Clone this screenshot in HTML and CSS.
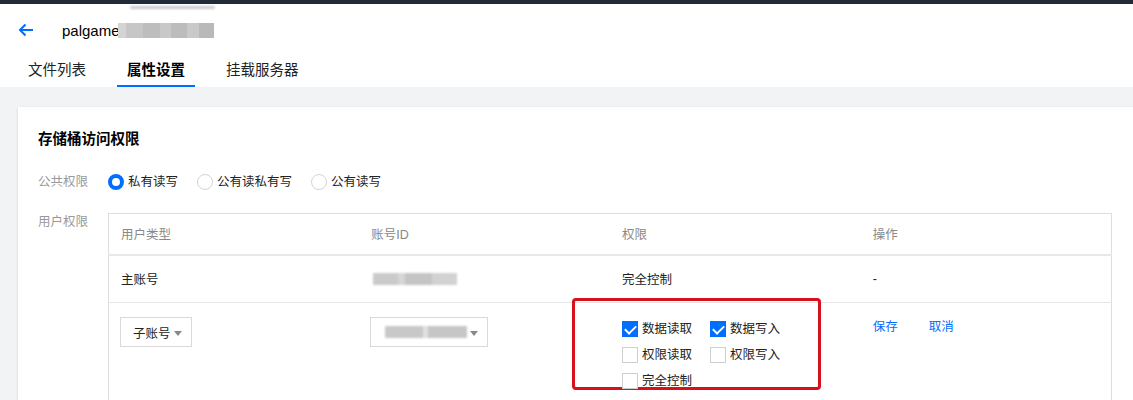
FILE: index.html
```html
<!DOCTYPE html>
<html lang="zh-CN">
<head>
<meta charset="utf-8">
<title>存储桶访问权限</title>
<link rel="stylesheet" href="styles.css">
</head>
<body>
<div class="topbar"></div>
<header class="header">
  <div class="title-row">
    <svg class="back" width="16" height="14" viewBox="0 0 16 14"><path d="M15 7H2M7.5 1.5L2 7l5.5 5.5" fill="none" stroke="#006eff" stroke-width="2"/></svg>
    <span class="bucket-name">palgame</span>
    <span class="blur-name"></span>
    <span class="blur-top"></span>
  </div>
  <nav class="tabs">
    <span class="tab">文件列表</span>
    <span class="tab active">属性设置</span>
    <span class="tab">挂载服务器</span>
  </nav>
</header>
<main class="main">
  <section class="card">
    <h2 class="card-title">存储桶访问权限</h2>
    <div class="form-row radio-row">
      <div class="label">公共权限</div>
      <div class="radios">
        <span class="radio-item"><span class="radio checked"></span>私有读写</span>
        <span class="radio-item"><span class="radio"></span>公有读私有写</span>
        <span class="radio-item"><span class="radio"></span>公有读写</span>
      </div>
    </div>
    <div class="form-row">
      <div class="label label-top">用户权限</div>
      <table class="perm-table">
        <thead>
          <tr><th>用户类型</th><th>账号ID</th><th>权限</th><th>操作</th></tr>
        </thead>
        <tbody>
          <tr class="row-main">
            <td>主账号</td>
            <td><span class="blur-id"></span></td>
            <td>完全控制</td>
            <td>-</td>
          </tr>
          <tr class="row-edit">
            <td><div class="select small">子账号<span class="caret"></span></div></td>
            <td><div class="select wide"><span class="blur-sel"></span><span class="caret"></span></div></td>
            <td class="perm-cell">
              <div class="highlight"></div>
              <div class="checks">
                <span class="check-item"><span class="checkbox on"></span>数据读取</span>
                <span class="check-item"><span class="checkbox on"></span>数据写入</span>
                <span class="check-item"><span class="checkbox"></span>权限读取</span>
                <span class="check-item"><span class="checkbox"></span>权限写入</span>
                <span class="check-item"><span class="checkbox"></span>完全控制</span>
              </div>
            </td>
            <td><span class="link">保存</span><span class="link">取消</span></td>
          </tr>
        </tbody>
      </table>
    </div>
  </section>
</main>
</body>
</html>
```
FILE: styles.css
```css
* { box-sizing: border-box; }
html, body { margin: 0; padding: 0; }
body {
  width: 1133px;
  height: 400px;
  overflow: hidden;
  background: #f2f3f5;
  font-family: "Liberation Sans", "Noto Sans CJK SC", sans-serif;
  color: #000;
}
.topbar { height: 4px; background: #222a38; }
.header { background: #fff; }
.title-row {
  position: relative;
  height: 52px;
  display: flex;
  align-items: center;
  padding-left: 18px;
}
.back { display: block; }
.bucket-name { margin-left: 28px; font-size: 15px; }
.blur-name {
  display: block;
  width: 96px;
  height: 15px;
  margin-left: -2px;
  background: linear-gradient(90deg, #d4d4d4 0 8%, #c6c6c6 8% 26%, #bdbdbd 26% 44%, #c8c8c8 44% 55%, #bcbcbc 55% 72%, #c9c9c9 72% 84%, #b9b9b9 84% 100%);
  filter: blur(0.6px);
}
.blur-top {
  position: absolute;
  left: 130px;
  top: 2px;
  width: 85px;
  height: 3px;
  background: #c9cbce;
  border-radius: 2px;
  filter: blur(1px);
}
.tabs {
  display: flex;
  gap: 21px;
  padding-left: 18px;
  height: 31px;
}
.tab {
  padding: 0 10px;
  font-size: 14.5px;
  line-height: 29px;
  border-bottom: 2px solid transparent;
  color: #222;
}
.tab.active { font-weight: bold; color: #000; border-bottom-color: #006eff; }

.main { padding: 20px 0 0 18px; }
.card {
  width: 1200px;
  height: 320px;
  background: #fff;
  box-shadow: 0 1px 3px rgba(0,0,0,0.12);
  padding: 22px 0 0 20px;
}
.card-title {
  margin: 0;
  font-size: 14.5px;
  line-height: 20px;
  font-weight: bold;
}
.form-row { display: flex; }
.radio-row { margin-top: 23px; margin-bottom: 21px; align-items: center; }
.label {
  width: 70px;
  flex: none;
  color: #999;
  font-size: 12.5px;
  line-height: 20px;
}
.label-top { margin-top: -1px; }
.radios { display: flex; gap: 19px; font-size: 12.5px; line-height: 20px; color: #222; }
.radio-item { display: flex; align-items: center; gap: 4px; }
.radio {
  width: 16px; height: 16px;
  border-radius: 50%;
  border: 1px solid #d4d4d4;
  background: #fff;
}
.radio.checked { border: 4px solid #006eff; }

.perm-table {
  width: 1004px;
  table-layout: fixed;
  border-collapse: collapse;
  border: 1px solid #dedede;
  font-size: 12.5px;
}
.perm-table th {
  text-align: left;
  font-weight: normal;
  color: #888;
  height: 41px;
  padding: 0 12px;
  border-bottom: 2px solid #e8e8e8;
}
.perm-table td { padding: 0 12px; vertical-align: middle; color: #222; }
.row-main td { height: 48px; border-bottom: 1px solid #e6e6e6; }
.row-edit td { vertical-align: top; padding-top: 14px; height: 120px; }
.select {
  position: relative;
  height: 30px;
  border: 1px solid #d9d9d9;
  display: flex;
  align-items: center;
  padding-left: 12px;
  color: #222;
}
.select.small { width: 72px; margin-left: -1px; }
.select.wide { width: 118px; margin-left: -1px; }
.caret {
  position: absolute;
  right: 9px;
  top: 13px;
  border-left: 4px solid transparent;
  border-right: 4px solid transparent;
  border-top: 5px solid #888;
}
.blur-id {
  display: block;
  width: 84px;
  height: 12px;
  background: linear-gradient(90deg, #cacaca 0 30%, #d6d6d6 30% 38%, #c4c4c4 38% 70%, #d2d2d2 70% 100%);
  filter: blur(1px);
  margin-left: 2px;
}
.blur-sel {
  display: block;
  width: 82px;
  height: 12px;
  margin-left: 2px;
  background: linear-gradient(90deg, #c8c8c8 0 46%, #e0e0e0 46% 52%, #c6c6c6 52% 100%);
  filter: blur(1.2px);
}
.perm-cell { position: relative; }
.highlight {
  position: absolute;
  left: -38px;
  top: -5px;
  width: 249px;
  height: 92px;
  border: 3px solid #d7101c;
  border-radius: 4px;
}
.checks {
  display: grid;
  grid-template-columns: 88px 88px;
  row-gap: 6px;
  margin-top: 2px;
}
.check-item { display: flex; align-items: center; gap: 4px; line-height: 20px; color: #222; }
.checkbox {
  width: 16px; height: 16px;
  border: 1px solid #cfcfcf;
  background: #fff;
  position: relative;
}
.checkbox.on { background: #006eff; border-color: #006eff; }
.checkbox.on::after {
  content: "";
  position: absolute;
  left: 4px; top: 1px;
  width: 5px; height: 9px;
  border-right: 2px solid #fff;
  border-bottom: 2px solid #fff;
  transform: rotate(45deg);
}
.link { color: #006eff; margin-right: 31px; line-height: 20px; }
```
